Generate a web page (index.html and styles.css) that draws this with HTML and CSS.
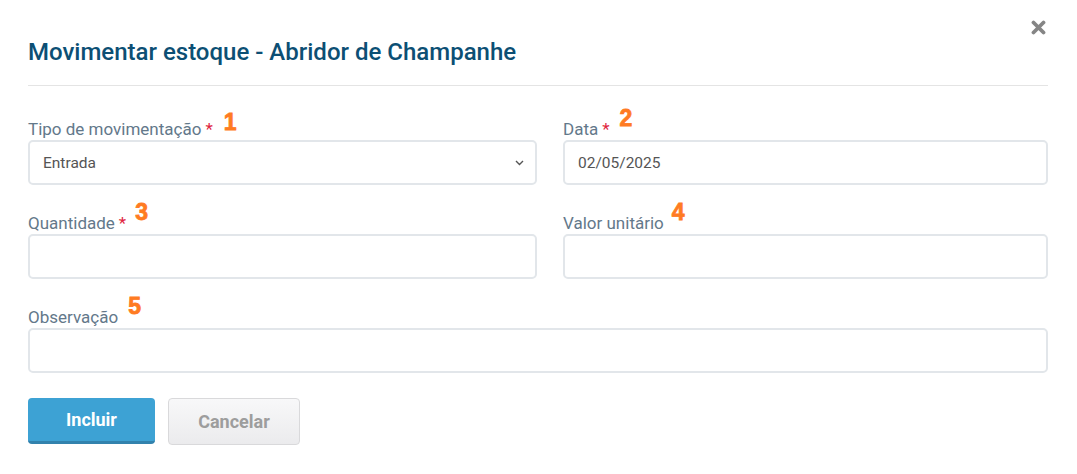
FILE: index.html
```html
<!DOCTYPE html>
<html lang="pt-BR">
<head>
<meta charset="utf-8">
<title>Movimentar estoque</title>
<link rel="stylesheet" href="styles.css">
</head>
<body>
<div class="modal">
  <button class="close" aria-label="Fechar">
    <svg width="15" height="15" viewBox="0 0 15 15"><path d="M2.5 2.5 L12.5 12.5 M12.5 2.5 L2.5 12.5" stroke="#858585" stroke-width="3.8" stroke-linecap="round"/></svg>
  </button>
  <h1 class="title">Movimentar estoque - Abridor de Champanhe</h1>
  <div class="divider"></div>
  <form class="form">
    <div class="grid">
      <div class="field">
        <label class="label">Tipo de movimentação<span class="req">*</span><span class="mark m1">1</span></label>
        <div class="control select">
          <span class="value">Entrada</span>
          <svg class="chev" width="9" height="6" viewBox="0 0 9 6"><path d="M1 1 L4.5 4.5 L8 1" fill="none" stroke="#555" stroke-width="1.4"/></svg>
        </div>
      </div>
      <div class="field">
        <label class="label">Data<span class="req">*</span><span class="mark m2">2</span></label>
        <div class="control"><span class="value">02/05/2025</span></div>
      </div>
      <div class="field">
        <label class="label">Quantidade<span class="req">*</span><span class="mark m3">3</span></label>
        <div class="control"></div>
      </div>
      <div class="field">
        <label class="label">Valor unitário<span class="mark m4">4</span></label>
        <div class="control"></div>
      </div>
      <div class="field wide">
        <label class="label">Observação<span class="mark m5">5</span></label>
        <div class="control"></div>
      </div>
    </div>
    <div class="actions">
      <button type="button" class="btn primary">Incluir</button>
      <button type="button" class="btn secondary">Cancelar</button>
    </div>
  </form>
</div>
</body>
</html>
```
FILE: styles.css
```css
* { box-sizing: border-box; }
html, body { margin: 0; padding: 0; background: #fff; }
body { font-family: Roboto, "Liberation Sans", sans-serif; }

.modal {
  position: relative;
  width: 1077px;
  height: 474px;
  padding: 0 29px 0 28px;
}

.close {
  position: absolute;
  top: 20px;
  left: 1031px;
  width: 15px;
  height: 15px;
  padding: 0;
  border: 0;
  background: none;
}
.close svg { display: block; }

.title {
  margin: 0;
  padding-top: 35px;
  height: 85px;
  font-size: 24px;
  line-height: 34px;
  font-weight: 500;
  color: #0c4f74;
}

.divider {
  height: 1px;
  background: #e4e4e4;
}

.form { padding-top: 31px; }

.grid {
  display: grid;
  grid-template-columns: 509px 485px;
  column-gap: 26px;
  row-gap: 26px;
}
.wide { grid-column: 1 / -1; }

.field { display: flex; flex-direction: column; }

.label {
  display: block;
  height: 20px;
  margin-bottom: 3px;
  font-size: 17px;
  line-height: 20px;
  color: #63788a;
  white-space: nowrap;
}
.req {
  color: #e0263e;
  margin-left: 4px;
}
.mark {
  position: relative;
  display: inline-block;
  font-family: "Liberation Sans", Arial, sans-serif;
  font-weight: 700;
  font-size: 23px;
  line-height: 20px;
  color: #ff7b22;
  -webkit-text-stroke: 0.8px #ff7b22;
}
.m1 { margin-left: 11px; top: -5px; }
.m2 { margin-left: 10px; top: -9px; }
.m3 { margin-left: 9px; top: -9px; }
.m4 { margin-left: 8px; top: -9px; }
.m5 { margin-left: 10px; top: -9px; }

.control {
  height: 45px;
  border: 2px solid #e2e6ea;
  border-radius: 5px;
  background: #fff;
  display: flex;
  align-items: center;
  padding: 0 13px;
}
.value {
  font-size: 15.5px;
  color: #555;
}
.select { justify-content: space-between; }
.chev { margin-right: -2px; }

.actions {
  display: flex;
  gap: 13px;
  margin-top: 25px;
}
.btn {
  height: 46px;
  border-radius: 4px;
  font-family: Roboto, "Liberation Sans", sans-serif;
  font-size: 18px;
  font-weight: 700;
  padding: 0;
}
.primary {
  width: 127px;
  background: #3da2d4;
  color: #fff;
  border: 0;
  border-bottom: 3px solid #3282ad;
}
.secondary {
  width: 132px;
  height: 47px;
  background: linear-gradient(#f8f8f9, #ebebed);
  color: #9d9d9d;
  border: 1px solid #d9d9db;
}
```
